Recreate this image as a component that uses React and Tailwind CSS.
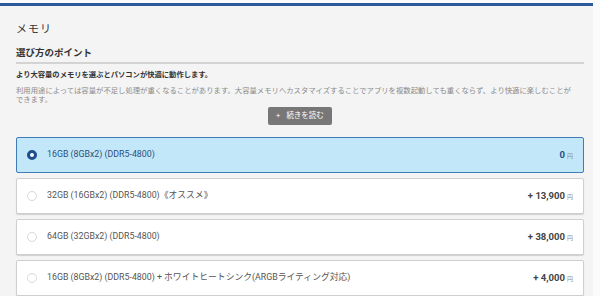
import React from "react";

const font = { fontFamily: 'Roboto, "Noto Sans CJK JP", sans-serif' };

const options = [
  { label: "16GB (8GBx2) (DDR5-4800)", price: "0", selected: true },
  { label: "32GB (16GBx2) (DDR5-4800)《オススメ》", price: "+ 13,900" },
  { label: "64GB (32GBx2) (DDR5-4800)", price: "+ 38,000" },
  { label: "16GB (8GBx2) (DDR5-4800) + ホワイトヒートシンク(ARGBライティング対応)", price: "+ 4,000" },
];

function Option({ o }) {
  return (
    <div
      className={
        "flex h-[36px] items-center justify-between rounded-[2px] border pl-[10px] pr-[10px] " +
        (o.selected
          ? "border-[#3f7db8] bg-[#c2e7f9]"
          : "border-[#cfcfcf] bg-white shadow-[0_1px_1px_rgba(0,0,0,0.15)]")
      }
    >
      <div className="flex items-center gap-[10px]">
        {o.selected ? (
          <span className="box-border h-[10px] w-[10px] rounded-full border-[3px] border-[#1d4f8c] bg-white" />
        ) : (
          <span className="box-border h-[10px] w-[10px] rounded-full border border-[#dadada] bg-white" />
        )}
        <span className={"text-[8.8px] " + (o.selected ? "text-[#2d4f7c]" : "text-[#555]")}>{o.label}</span>
      </div>
      <div className="flex items-baseline gap-[2px]">
        <span className={"text-[9.5px] font-bold " + (o.selected ? "text-[#1d4f8c]" : "text-[#444]")}>{o.price}</span>
        <span className="text-[6px] text-[#888]">円</span>
      </div>
    </div>
  );
}

export default function App() {
  return (
    <div className="flex h-[296px] w-[600px] bg-[#fbfbfb]" style={font}>
      <div className="w-[593px] pt-[3px]">
        <div className="h-[3px] bg-[#2c5b9b]" />
        <div className="h-[290px] bg-[#f4f4f4] pl-[16px] pr-[9px] pt-[17px]">
          <div className="text-[11px] leading-[14px] tracking-[1px] text-[#333]">メモリ</div>
          <div className="mt-[10px] text-[9.5px] font-bold leading-[12px] text-[#333]">選び方のポイント</div>
          <div className="mt-[3px] h-[2px] bg-[#d3d3d3]" />
          <div className="mt-[6px] text-[7.3px] font-bold leading-[10px] text-[#333]">
            より大容量のメモリを選ぶとパソコンが快適に動作します。
          </div>
          <div className="mt-[6px] pr-[10px] text-[7.35px] leading-[9px] text-[#8a8a8a]">
            利用用途によっては容量が不足し処理が重くなることがあります。大容量メモリへカスタマイズすることでアプリを複数起動しても重くならず、より快適に楽しむことが<br />できます。
          </div>
          <div className="mt-[3px] flex justify-center">
            <div className="flex h-[18px] items-center gap-[6px] rounded-[2px] bg-[#777] px-[8px] text-[7.5px] text-white">
              <span>+</span>
              <span>続きを読む</span>
            </div>
          </div>
          <div className="mt-[12px] flex flex-col gap-[5px]">
            {options.map((o, i) => (
              <Option key={i} o={o} />
            ))}
          </div>
        </div>
      </div>
    </div>
  );
}
